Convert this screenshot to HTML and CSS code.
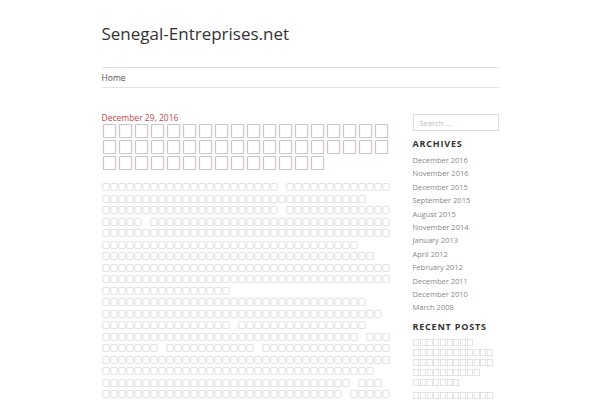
FILE: index.html
```html
<!DOCTYPE html>
<html lang="en">
<head>
    <meta charset="UTF-8">
    <meta name="viewport" content="width=device-width, initial-scale=1.0">
    <title>Senegal-Entreprises.net</title>
    <link rel="stylesheet" href="styles.css">
</head>
<body>

    <div class="site">
        <header class="site-header">
            <div class="site-title">Senegal-Entreprises.net</div>
        </header>

        <nav class="main-nav">
            <a href="#">Home</a>
        </nav>

        <div class="site-content">
            <main class="content-area">
                <div class="entry-date">December 29, 2016</div>
                <h1 class="entry-title">□□□□□□□□□□□□□□□□□□□□□□□□□□□□□□□□□□□□□□□□□□□□□□□□□□</h1>
                <div class="entry-content">
                    <p>□□□□□□□□□□□□□□□□□□□□□□　□□□□□□□□□□□□□<br>
                    □□□□□□□□□□□□□□□□□□□□□□□□□□□□□□□□□<br>
                    □□□□□□□□□□□□□□□□□□□□□□　□□□□□□□□□□□□□<br>
                    □□□□□　□□□□□□□□□□□□□□□□□□□□□□□□□□□□□□<br>
                    □□□□□□□□□□□□□□□□□□□□□□□□□□□□□□□□□□□□<br>
                    □□□□□□□□□□□□□□□□□□□□□□□□□□□□□□□□<br>
                    □□□□□□□□□□□□□□□□□□□□□□□□□□□□□□□□□□<br>
                    □□□□□□□□□□□□□□□□□□□□□□□□□□□□□□□□□□□□<br>
                    □□□□□□□□□□□□□□□□□□□□□□□□□□□□□□□□□□□□<br>
                    □□□□□□□□□□□□□□□□</p>
                    <p>□□□□□□□□□□□□□□□□□□□□□□□□□□□□□□□□□<br>
                    □□□□□□□□□□□□□□□□□□□□□□□□□□□□□□□□□□□<br>
                    □□□□□□□□□□□□□□□□　□□□□□□□□□□□□□□□□<br>
                    □□□□□□□□□□□□□□□□□□□□□□□□□□□□□□□□　□□□<br>
                    □□□□□□□　□□□□□□□□□□□　□□□□□□□□□□□□□□□□<br>
                    □□□□□□□□□□□□□□□□□□□□□□□□□□□□□□□□□□□□<br>
                    □□□□□□□□□□□□□□□□□□□□□□□□□□□□□□□□□□<br>
                    □□□□□□□□□□□□□□□□□□□□□□□□□□□□□□□　□□□<br>
                    □□□□□□□□□□□□□□□□□□□□□□□□□□□□□□　□□□□□</p>
                </div>
            </main>

            <aside class="sidebar">
                <input class="search-field" type="search" placeholder="Search ...">

                <h3 class="widget-title">Archives</h3>
                <ul class="archive-list">
                    <li>December 2016</li>
                    <li>November 2016</li>
                    <li>December 2015</li>
                    <li>September 2015</li>
                    <li>August 2015</li>
                    <li>November 2014</li>
                    <li>January 2013</li>
                    <li>April 2012</li>
                    <li>February 2012</li>
                    <li>December 2011</li>
                    <li>December 2010</li>
                    <li>March 2008</li>
                </ul>

                <h3 class="widget-title">Recent Posts</h3>
                <ul class="recent-list">
                    <li>□□□□□□□□□　□□□□□□□□□□□□　□□□□□□□□□□□□　□□□□□□□□□□　□□□□□□□</li>
                    <li>□□□□□□□□□□□□</li>
                </ul>
            </aside>
        </div>
    </div>

</body>
</html>
```
FILE: styles.css
```css
body {
    margin: 0;
    background: #fff;
    color: #333;
    font-family: "Open Sans", sans-serif;
}
.site {
    width: 397px;
    margin: 0 auto;
}
.site-header {
    padding: 21px 0 21px;
}
.site-title {
    font-size: 17px;
    line-height: 25px;
    color: #333;
}
.main-nav {
    border-top: 1px solid #e2e2e2;
    border-bottom: 1px solid #e2e2e2;
    height: 19px;
    display: flex;
    align-items: center;
}
.main-nav a {
    font-size: 8.5px;
    color: #555;
    text-decoration: none;
}
.site-content {
    display: flex;
    gap: 21px;
    padding-top: 25px;
}
.content-area {
    width: 290px;
}
.entry-date {
    margin-top: 1px;
    font-size: 8.5px;
    line-height: 8px;
    color: #c5474b;
}
.entry-title {
    margin: 0;
    font-family: "Noto Sans CJK SC", sans-serif;
    font-weight: normal;
    font-size: 16px;
    line-height: 16px;
    color: #999;
    word-break: break-all;
}
.entry-content {
    font-family: "Noto Sans CJK SC", sans-serif;
    font-size: 8px;
    line-height: 11.5px;
    color: #9a9a9a;
    padding-top: 11px;
    will-change: transform;
}
.entry-content p {
    margin: 0;
    white-space: nowrap;
}
.sidebar {
    width: 86px;
    padding-top: 1px;
}
.search-field {
    display: block;
    width: 100%;
    height: 17px;
    box-sizing: border-box;
    border: 1px solid #ddd;
    padding: 0 6px;
    font-family: "Open Sans", sans-serif;
    font-size: 7.5px;
    margin-bottom: 7px;
}
.search-field::placeholder {
    color: #bbb;
}
.widget-title {
    margin: 0 0 4px;
    font-size: 9px;
    line-height: 12px;
    font-weight: 700;
    letter-spacing: 0.8px;
    text-transform: uppercase;
    color: #333;
}
.archive-list,
.recent-list {
    list-style: none;
    margin: 0 0 6px;
    padding: 0;
}
.archive-list li {
    font-size: 7.5px;
    line-height: 13.4px;
    color: #888;
}
.recent-list {
    will-change: transform;
}
.recent-list li {
    font-family: "Noto Sans CJK SC", sans-serif;
    font-size: 6.7px;
    line-height: 10px;
    color: #9a9a9a;
    margin-bottom: 3px;
}
```
